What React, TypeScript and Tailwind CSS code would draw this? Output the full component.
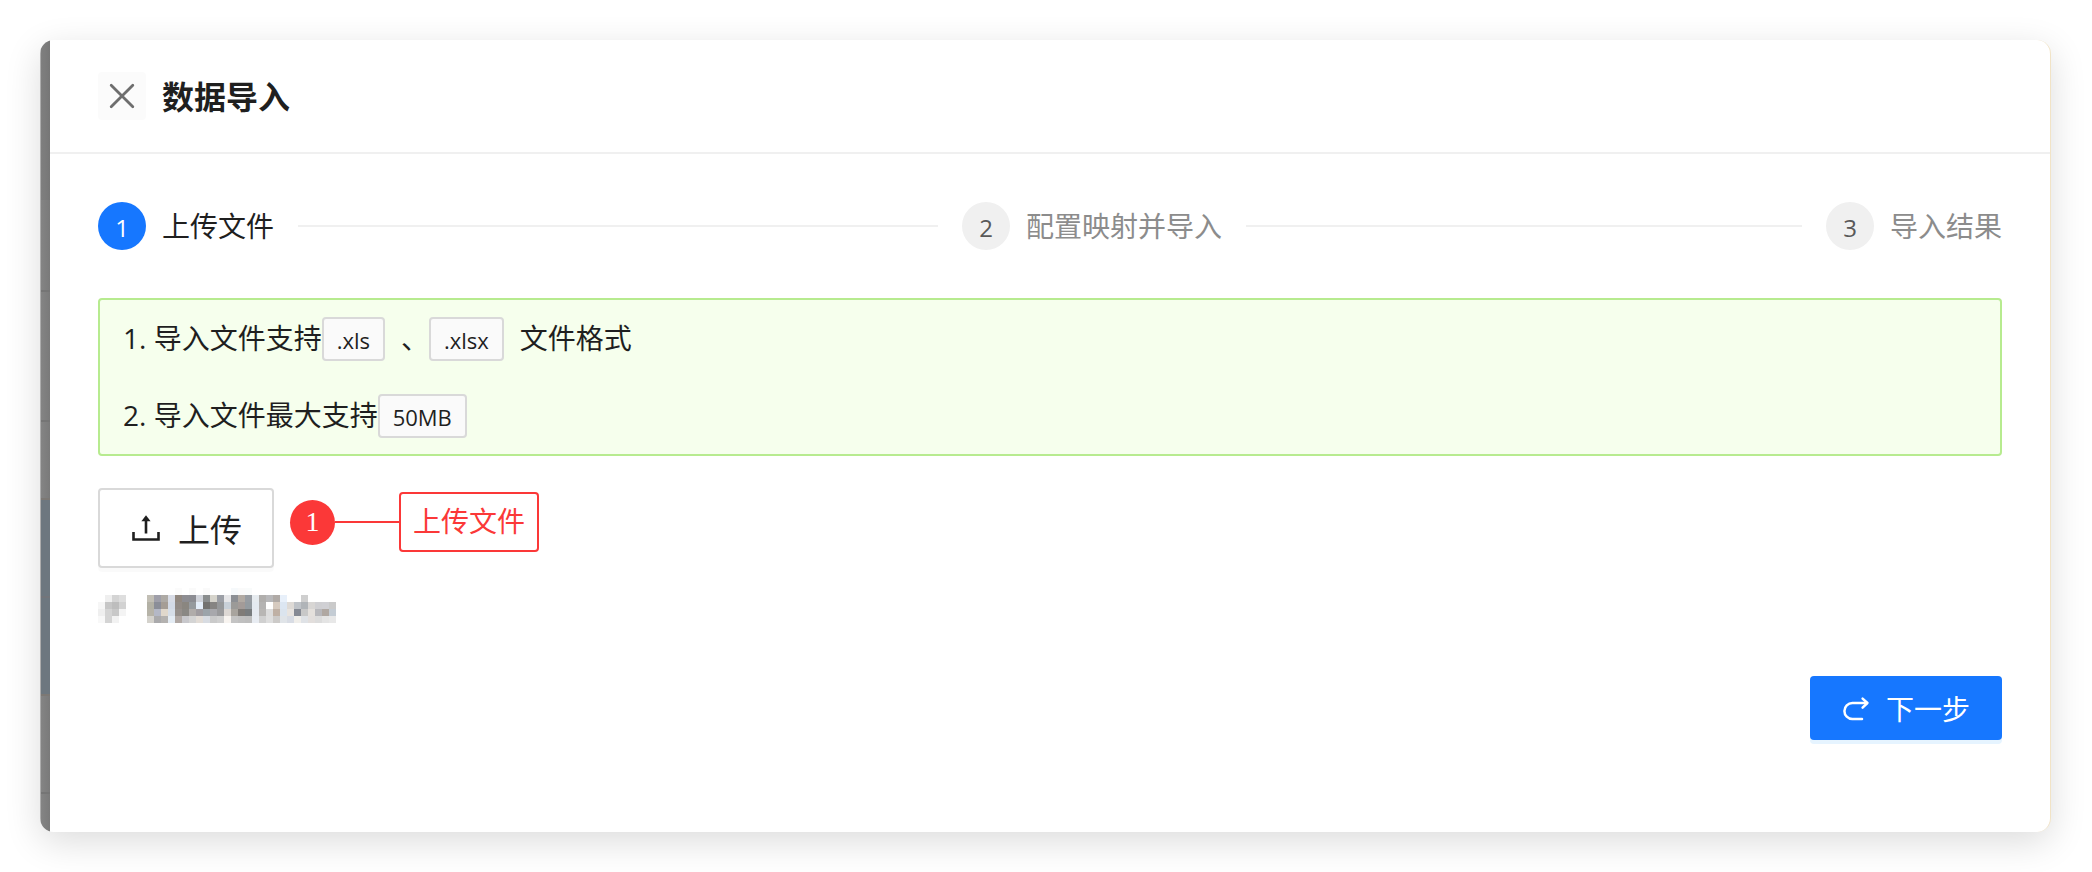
import { Fragment } from 'react';
import type { ReactNode } from 'react';

const STEPS = ['上传文件', '配置映射并导入', '导入结果'];

// Masked file name, one colour per 7px cell, "-" is an empty cell
const MASKED_ROWS = [
  '- - - - - - - - - - - fbfbfb - fafafa - fafafa - - - f6f9fb fafafa f9fbfb - - - - - - - - - - - -',
  '- efefef d4d4d4 dedede - - - c2bfb5 9f9fa9 aeaaa5 d8dce6 918880 8d8d92 8b8c92 d0d3da 8a8d8e d6d4cc 9c9fa6 e6e6e8 8c8f94 b1aaa3 979ca2 e6ebef b0aeac b8b8ba b0aaa6 e8f0fa - - cfcfcf - - - -',
  'f6f6f6 c6c6c6 bdbdbd d2d2d2 - - - b3b1a5 8b8e98 a59d95 d3dae6 928b86 8a8680 959a9e e4eefa 737270 868482 96989a c8d0d8 9b9a98 a39b98 949ba0 e4eaf0 b4b3b2 - d6cabf dce6f2 dedad6 bfc3c8 b0b4b8 d8d6d4 cfcfd2 d0d0d4 cacaca',
  'efefef d4d4d4 c8c8c8 f4f4f4 - - - b6b3a8 b4b8c6 e0d8cc d6dee8 96908c 8a8884 b0acaa a09ca0 9ca4aa a8a8ac 9a9a9c ddd8d4 a8a49e 807c78 787c7e e6eaf0 b8b6b4 dcdcdc bfb0a4 dbe4ee e8e4e0 868a94 c8c8c8 e4e0dc b8b8bc b0a8a2 c4ccd4',
  'f8f8f8 d4d4d4 f2f2f2 - - - - d4d2cc aaaaac b4b2b0 e4ecf4 b0a8a4 c8c8cc d4d4d4 e2dcd6 d8dce2 cacaca d0d0d0 f8f4f0 c4c4c4 c0c0c0 bebebe e8ecf2 d0d0d0 dedede cccac8 e0e4e8 d8dce4 f0eeea dfe2e6 e2dedc dcdcdc e4e4e4 e8e8e8',
].map((row) => row.split(' '));

function CloseIcon() {
  return (
    <svg width="28" height="28" viewBox="0 0 28 28" fill="none" stroke="#6e6e6e" strokeWidth="2.8" strokeLinecap="round" aria-hidden="true">
      <path d="M3.2 3.2 24.8 24.8M24.8 3.2 3.2 24.8" />
    </svg>
  );
}

function UploadIcon() {
  return (
    <svg width="32" height="32" viewBox="0 0 32 32" fill="none" stroke="#1f1f1f" strokeWidth="2.6" aria-hidden="true">
      <path d="M3.5 20v7.5h25V20M16 8v13.6" />
      <path d="M16 3.2 20.6 9.2h-9.2z" fill="#1f1f1f" stroke="none" />
    </svg>
  );
}

function NextIcon() {
  return (
    <svg width="28" height="28" viewBox="0 0 28 28" fill="none" stroke="#fff" strokeWidth="2.5" strokeLinecap="round" strokeLinejoin="round" aria-hidden="true">
      <path d="M25 9H10.4a8 8 0 0 0 0 16H20" />
      <path d="m20.6 4.6 4.8 4.4-4.8 4.6" />
    </svg>
  );
}

function Tag({ children }: { children: ReactNode }) {
  return (
    <span className="mr-4 inline-flex h-11 items-center rounded-sm border-2 border-[#d9d9d9] bg-[#fafafa] px-[13px] pt-0.5 align-middle text-[22px] leading-9">
      {children}
    </span>
  );
}

function PageEdge() {
  // the dimmed page that shows beside the drawer
  return (
    <div className="flex w-[10px] shrink-0 flex-col border-l border-[#adadad] bg-linear-to-r from-[#848484] to-[#7a7a7a]">
      <div className="flex-[160] bg-black/3" />
      <div className="flex-[90] border-b-2 border-[#757575]" />
      <div className="flex-[128] border-b-2 border-[#757575]" />
      <div className="flex-[76] border-b-2 border-[#7c7874]" />
      <div className="flex-[96] border-b-2 border-[#73757a] bg-[#6d777f]" />
      <div className="flex-[96] border-b-2 border-[#7c7874] bg-[#6d777f]" />
      <div className="flex-[96] border-b-2 border-[#757575]" />
      <div className="flex-[38]" />
    </div>
  );
}

export default function App() {
  return (
    <div className="bg-white py-10 pr-[41px] pl-10 font-['Open_Sans','Noto_Sans_CJK_SC',sans-serif] text-[28px] leading-[44px] text-[#1f1f1f]">
      <div className="flex overflow-hidden rounded-[14px] border-r border-[#f1e3c6] bg-white shadow-[0_10px_36px_rgba(0,0,0,0.14)]">
        <PageEdge />

        <div className="min-w-0 flex-1">
          <header className="flex items-center gap-4 border-b-2 border-[#f0f0f0] px-12 py-8">
            <button type="button" aria-label="关闭" className="flex size-12 items-center justify-center rounded bg-[#fbfbfb]">
              <CloseIcon />
            </button>
            <h1 className="pt-0.5 text-[32px] leading-[44px] font-bold">数据导入</h1>
          </header>

          <main className="px-12 pt-12 pb-[92px]">
            <ol className="flex gap-6">
              {STEPS.map((step, i) => {
                const active = i === 0;
                const last = i === STEPS.length - 1;
                return (
                  <li key={step} className={last ? 'flex items-center' : 'flex flex-1 items-center'}>
                    <span
                      className={
                        active
                          ? 'mr-4 flex size-12 items-center justify-center rounded-full bg-[#1677ff] pt-1 text-[24px] text-white'
                          : 'mr-4 flex size-12 items-center justify-center rounded-full bg-[#f0f0f0] pt-1 text-[24px] text-[#595959]'
                      }
                    >
                      {i + 1}
                    </span>
                    <span className={active ? 'whitespace-nowrap' : 'whitespace-nowrap text-[#8c8c8c]'}>{step}</span>
                    {!last && <span className="ml-6 h-0.5 flex-1 bg-[#f0f0f0]" />}
                  </li>
                );
              })}
            </ol>

            <section className="mt-12 rounded-sm border-2 border-[#b7eb8f] bg-[#f6ffed] px-[23px] leading-[77px]">
              <p className="flex items-center">
                1. 导入文件支持<Tag>.xls</Tag>、<Tag>.xlsx</Tag>文件格式
              </p>
              <p className="flex items-center">
                2. 导入文件最大支持<Tag>50MB</Tag>
              </p>
            </section>

            <div className="mt-8 flex items-start">
              <button
                type="button"
                className="flex h-20 items-center gap-4 rounded-sm border-2 border-[#d9d9d9] bg-white px-[30px] text-[32px] shadow-[0_4px_0_rgba(0,0,0,0.02)]"
              >
                <UploadIcon />
                <span className="pt-1">上传</span>
              </button>

              <div className="mt-1 ml-4 flex items-center text-[#fb3838]">
                <span className="flex size-[45px] items-center justify-center rounded-full bg-[#fb3838] font-['Liberation_Serif',serif] text-white">
                  1
                </span>
                <span className="h-0.5 w-16 bg-[#fb3838]" />
                <span className="flex h-[60px] items-center rounded-sm border-2 border-[#fb3838] px-3 pb-0.5">上传文件</span>
              </div>
            </div>

            <svg className="mt-5" width="238" height="36" viewBox="0 0 238 36" shapeRendering="crispEdges" aria-hidden="true">
              {MASKED_ROWS.map((row, y) => (
                <Fragment key={y}>
                  {row.map((cell, x) =>
                    cell === '-' ? null : <rect key={x} x={x * 7} y={y * 7} width="7" height="7" fill={`#${cell}`} />
                  )}
                </Fragment>
              ))}
            </svg>

            <div className="mt-[52px] flex justify-end">
              <button
                type="button"
                className="flex h-16 items-center gap-4 rounded-sm bg-[#1677ff] px-8 text-white shadow-[0_4px_0_#e6f4ff]"
              >
                <NextIcon />
                <span className="pt-0.5">下一步</span>
              </button>
            </div>
          </main>
        </div>
      </div>
    </div>
  );
}
